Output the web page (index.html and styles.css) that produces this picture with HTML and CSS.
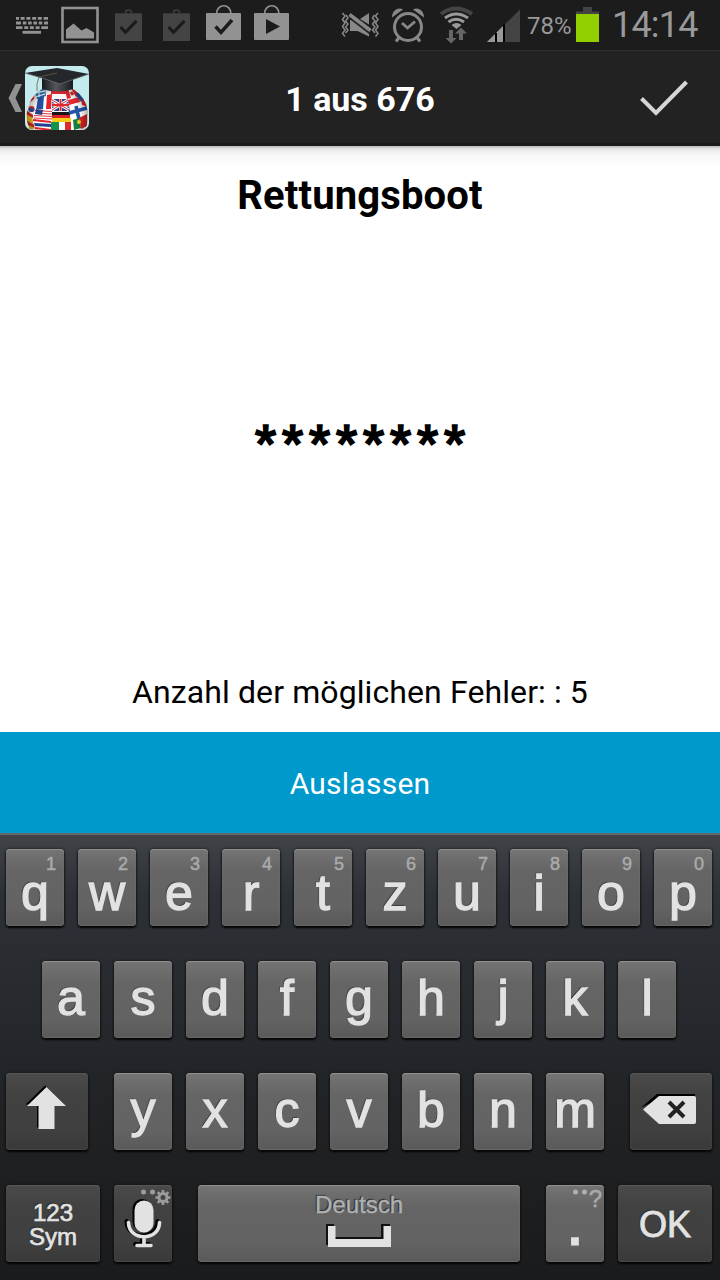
FILE: index.html
```html
<!DOCTYPE html>
<html lang="de">
<head>
<meta charset="utf-8">
<title>1 aus 676</title>
<link rel="stylesheet" href="styles.css">
</head>
<body>
<div class="screen">
  <div class="status">
    <svg width="54" height="50" viewBox="0 0 54 50"><g fill="none" stroke="#929292" stroke-width="2.900"><path d="M16 18.400h32" stroke-dasharray="3 1.600 4 1.800 4 1.800 4 1.600 4 1.800 6"/><path d="M16 23h32" stroke-dasharray="5 1.800 3.600 1.700 3.600 1.700 3.600 1.700 3.600 1.700 6"/><path d="M16 27.600h32" stroke-dasharray="6.500 1.700 4 1.700 4 1.700 4 1.700 9"/><path d="M22.500 32.300h18.500"/></g></svg>
    <svg width="52" height="50" viewBox="54 0 52 50"><rect x="62.500" y="8" width="35" height="34" fill="none" stroke="#929292" stroke-width="2.600"/><path d="M66 38.500v-9l7.500-6 8 7 5-2.500 7.500 4.500v6z" fill="#929292"/></svg>
    <svg width="48" height="50" viewBox="106 0 48 50"><path d="M125.500 13.500v-1q0-2.500 3-2.500t3 2.500v1" fill="none" stroke="#404040" stroke-width="1.500"/><path d="M115 13.300h27v27.700h-27z" fill="#444"/><path d="M120.500 27l5 5.300 11-11.500" fill="none" stroke="#1c1c1c" stroke-width="3.200"/></svg>
    <svg width="48" height="50" viewBox="154 0 48 50"><path d="M173.500 13.500v-1q0-2.500 3-2.500t3 2.500v1" fill="none" stroke="#404040" stroke-width="1.500"/><path d="M163 13.300h27v27.700h-27z" fill="#444"/><path d="M168.500 27l5 5.300 11-11.500" fill="none" stroke="#1c1c1c" stroke-width="3.200"/></svg>
    <svg width="45" height="50" viewBox="202 0 45 50"><path d="M216.500 14c0-11 14.500-11 14.500 0" fill="none" stroke="#929292" stroke-width="1.700"/><rect x="206" y="13" width="35" height="27" rx="1" fill="#929292"/><path d="M215.500 26.500l5.500 6 11-12.500" fill="none" stroke="#1c1c1c" stroke-width="3.500"/></svg>
    <svg width="47" height="50" viewBox="247 0 47 50"><path d="M264.500 14c0-11 14.500-11 14.500 0" fill="none" stroke="#929292" stroke-width="1.700"/><rect x="254" y="13" width="35" height="27" rx="1" fill="#929292"/><path d="M266 19v15l14-7.500z" fill="#1c1c1c"/></svg>
    <span class="spacer"></span>
    <svg width="48" height="50" viewBox="336 0 48 50"><g fill="none" stroke="#888" stroke-width="1.500"><path d="M342.500 13l2.500 3-2.500 3.500 2.500 3.500-2.500 3.500 2.500 3.500-2.500 3.500 2.500 3M346 15l2 3-2.500 3 2.500 3-2.500 3 2.500 3-2.500 3M378 13l-2.500 3 2.500 3.500-2.500 3.500 2.500 3.500-2.500 3.500 2.500 3.500-2.500 3M374.500 15l-2 3 2.500 3-2.500 3 2.500 3-2.500 3 2.500 3"/></g><path d="M350 20h3l16 12.500v4L357.500 31H350zM360 19l9-6v11.500z" fill="#888"/><path d="M350 18.500l19.500 15" stroke="#1c1c1c" stroke-width="1.300"/><path d="M349.500 14.500l21 16" stroke="#888" stroke-width="3.500"/></svg>
    <svg width="48" height="50" viewBox="384 0 48 50"><g fill="none" stroke="#888"><circle cx="408" cy="27" r="13.500" stroke-width="3"/><path d="M402 23l5.500 5 7.500-6.500" stroke-width="2.800"/><path d="M399 37.500l-3 4M417 37.500l3 4" stroke-width="3"/></g><path d="M392 17.500c0-7 6-11 11-8zM424 17.500c0-7-6-11-11-8z" fill="#888"/></svg>
    <svg width="48" height="50" viewBox="432 0 48 50"><g fill="none" stroke-width="3"><path d="M441 14q15-11 31 0" stroke="#444" stroke-width="4"/><path d="M445 18q11-8 23 0M448.500 22q7.500-5.500 15.500 0" stroke="#999"/></g><path d="M451.500 25q5-4 10 0l-5 4z" fill="#999"/><path d="M449 30h4v8h3.500l-5.500 5.500-5.500-5.500h3.500zM459 40h4v-6.500h4l-6-6-6 6h4z" fill="#666"/></svg>
    <svg width="44" height="50" viewBox="480 0 44 50"><path d="M487 42L520 9.500V42z" fill="#444"/><path d="M487 42l16.500-16.500V42z" fill="#999"/><path d="M496 33v9M504 24.500V42" stroke="#000" stroke-width="2"/></svg>
    <span class="percent">78%</span>
    <svg width="30" height="50" viewBox="573 0 30 50"><path d="M576 14v-2.500h7V7h9v4.500h7V14z" fill="#444"/><path d="M576 14h23v28h-23z" fill="#91cf00"/></svg>
    <span class="clock">14:14</span>
  </div>

  <div class="header">
    <div class="home">
      <svg width="25" height="96" viewBox="0 50 25 96"><path d="M15.500 84h6.500l-6.500 14 6.500 14h-6.500l-7-14z" fill="#919191"/></svg>
      <svg class="logo" width="64" height="64" viewBox="0 0 64 64">
        <defs><clipPath id="globe"><circle cx="32.500" cy="50" r="31"/></clipPath>
        <linearGradient id="cap" x2="1"><stop offset="0" stop-color="#16181b"/><stop offset=".45" stop-color="#53575c"/><stop offset="1" stop-color="#17191c"/></linearGradient>
        <radialGradient id="shade"><stop offset=".7" stop-opacity="0"/><stop offset="1" stop-opacity=".3"/></radialGradient></defs>
        <rect width="64" height="64" fill="#c3ebee"/>
        <g clip-path="url(#globe)">
          <rect width="64" height="64" fill="#fff"/>
          <path d="M9 24l11-3 1 9-9 3z" fill="#2a78bd"/><path d="M9 27l11-2M10 31l10-3M14 22v9" stroke="#fff" stroke-width="1.300"/>
          <path d="M13 32l6-2-1 13-7 1z" fill="#2450a2"/><path d="M22 29l5-1-1 15h-5z" fill="#e3252b"/>
          <path d="M26 24h15v4H26z" fill="#df2931"/><path d="M27 28h15v3H27z" fill="#f7f7f7"/>
          <path d="M2 34l8-9-1 8-6 5z" fill="#e0242b"/>
          <circle cx="6.500" cy="43" r="3" fill="#df2830"/><path d="M3.500 43q3-2 6 0a3 3 0 0 1-6 0" fill="#244da1"/>
          <path d="M0 46l7 4 2 13H0z" fill="#e7bd20"/><path d="M1 44l7 5v3l-7-4zM2 55l8 4v3l-7-3z" fill="#d4232a"/>
          <path d="M10 43l17 2v9l-18-2z" fill="#fff"/><path d="M10 44.500l17 1M10 47l17 1M9 49.500l18 1M9 52l18 1" stroke="#e33b43" stroke-width="1.200"/><path d="M11 43l7 1-1 5-7-1z" fill="#244087"/>
          <path d="M8 54l18 1v9H10z" fill="#fff"/><path d="M8 54l18 2M10 62l16 2" stroke="#df2730" stroke-width="2"/><path d="M9 57l17 1v3l-16-1z" fill="#203d91"/>
          <path d="M27 33h16l2 12H27z" fill="#22448f"/><path d="M27 34l17 10M43 34L27 44M35.500 33v12M27 39h17" stroke="#fff" stroke-width="3"/><path d="M27 34l17 10M43 34L27 44" stroke="#df2830" stroke-width="1"/><path d="M35.500 33v12M27 39h17" stroke="#df2830" stroke-width="2"/>
          <path d="M27 46h18v3H27z" fill="#161616"/><path d="M27 49h18v3H27z" fill="#dc2226"/><path d="M27 52h19v4H27z" fill="#f6ce18"/>
          <path d="M26 56h8v8h-8z" fill="#16934a"/><path d="M40 56h6v8h-6z" fill="#df2a2b"/>
          <path d="M43 22l3 10-4 1-2-10zM50 21l5 8-4 2-5-9z" fill="#df252c"/><path d="M46 26l2 3" stroke="#df252c" stroke-width="3"/>
          <path d="M43 34l11-3 1 5-11 3z" fill="#e22a31"/><path d="M54 24l7 9-5 3-5-7z" fill="#2355a0"/><path d="M56 33l7 3v5l-6-2z" fill="#dd292e"/>
          <path d="M44 47l18-5M51 40l3 13" stroke="#2455a3" stroke-width="3.600"/>
          <path d="M48 54l6-2 2 10-7 2z" fill="#13813f"/><path d="M54 52l8-4v12l-6 3z" fill="#db2426"/><circle cx="54" cy="56" r="2" fill="#f1cc22"/>
          <circle cx="32.500" cy="50" r="31" fill="url(#shade)"/>
        </g>
        <path d="M17 12h31v11q-15 5-31 0z" fill="url(#cap)"/><path d="M0 7L32 2l32 6-29 10Q17 12 0 7z" fill="#24272b"/><path d="M0 7q18 5 35 11L64 8" fill="none" stroke="#6b6f72" stroke-width=".8"/><path d="M32 7l-18 4-2 7v7" fill="none" stroke="#6d5a41" stroke-width=".8"/>
      </svg>
    </div>
    <h1 class="title">1 aus 676</h1>
    <svg class="done" width="80" height="96" viewBox="620 50 80 96"><path d="M641.500 98.500L656 113l30.500-31" fill="none" stroke="#d6d6d6" stroke-width="4"/></svg>
  </div>

  <div class="content">
    <div class="word">Rettungsboot</div>
    <div class="stars">********</div>
    <div class="tries">Anzahl der möglichen Fehler: : 5</div>
  </div>
  <div class="skip">Auslassen</div>

  <div class="keyboard">
    <div class="row top">
      <div class="key">q<sup>1</sup></div><div class="key">w<sup>2</sup></div><div class="key">e<sup>3</sup></div><div class="key">r<sup>4</sup></div><div class="key">t<sup>5</sup></div><div class="key">z<sup>6</sup></div><div class="key">u<sup>7</sup></div><div class="key">i<sup>8</sup></div><div class="key">o<sup>9</sup></div><div class="key">p<sup>0</sup></div>
    </div>
    <div class="row middle">
      <div class="key">a</div><div class="key">s</div><div class="key">d</div><div class="key">f</div><div class="key">g</div><div class="key">h</div><div class="key">j</div><div class="key">k</div><div class="key">l</div>
    </div>
    <div class="row">
      <div class="key dark wide"><svg width="82" height="77" viewBox="6 1073 82 77"><path d="M46.500 1087l19.500 19H54.500v23h-16v-23H27z" fill="#000" transform="translate(-1.500 -1.500)"/><path d="M46.500 1087l19.500 19H54.500v23h-16v-23H27z" fill="#e2e2e2"/></svg></div>
      <div class="letters"><div class="key">y</div><div class="key">x</div><div class="key">c</div><div class="key">v</div><div class="key">b</div><div class="key">n</div><div class="key">m</div></div>
      <div class="key dark wide"><svg width="82" height="77" viewBox="630 1073 82 77"><path d="M641 1107.500l16-13.500h38v3h-30z" fill="#000"/><path d="M643 1109.500l16-13.500h35q2 0 2 2v24q0 2-2 2h-35z" fill="#e2e2e2"/><path d="M669 1102l15 15M684 1102l-15 15" stroke="#222" stroke-width="4"/></svg></div>
    </div>
    <div class="row bottom">
      <div class="key dark sym"><span>123</span><span>Sym</span></div>
      <div class="key dark mic"><svg width="58" height="77" viewBox="114 1185 58 77">
        <g transform="translate(-2 -1.500)" stroke="#000" fill="none" stroke-width="4" stroke-linecap="round"><rect x="136.500" y="1202.500" width="15" height="28" rx="7.500" fill="#000"/><path d="M128.500 1222.500c0 19 31 19 31 0M144 1237v8M137 1245.500h14"/></g>
        <rect x="134.500" y="1200.500" width="19" height="32" rx="9.500" fill="#e2e2e2"/><path d="M128.500 1222.500c0 19 31 19 31 0M144 1237v8M137 1245.500h14" fill="none" stroke="#e2e2e2" stroke-width="3.600" stroke-linecap="round"/>
        <g fill="#9c9c9c"><circle cx="143.500" cy="1192" r="2.500"/><circle cx="152.500" cy="1192" r="2.500"/></g><g fill="none" stroke="#9c9c9c"><circle cx="163" cy="1197.500" r="4" stroke-width="3"/><path d="M163 1190v3M163 1202v3M155.500 1197.500h3M167.500 1197.500h3M157.700 1192.200l2 2M166.300 1200.800l2 2M157.700 1202.800l2-2M166.300 1194.200l2-2" stroke-width="2.600"/></g></svg></div>
      <div class="key space"><span>Deutsch</span><svg width="70" height="28" viewBox="324 1222 70 28"><path d="M326 1224h8v13.500h48v-13.500h8v6h-56v15h-8z" fill="none"/><path d="M326 1224h8v13h47v-13h9v2h-6v15h-52v4h-6z" fill="#111"/><path d="M328 1226h7.500v13h48v-13h7.500v21h-63z" fill="#e2e2e2"/></svg></div>
      <div class="key period">.<sup>?</sup><svg width="22" height="8" viewBox="570 1188 22 8"><g fill="#b0b0b0"><circle cx="575.500" cy="1192" r="2.500"/><circle cx="584.500" cy="1192" r="2.500"/></g></svg></div>
      <div class="key dark ok">OK</div>
    </div>
  </div>
</div>
</body>
</html>
```
FILE: styles.css
```css
body { margin: 0; }
svg { display: block; flex: none; }

.screen {
  width: 720px;
  height: 1280px;
  display: flex;
  flex-direction: column;
  overflow: hidden;
  background: #fff;
  color: #000;
  font-family: Roboto, "Liberation Sans", sans-serif;
}

.status {
  height: 50px;
  display: flex;
  background: #1c1c1c;
  color: #999;
  line-height: 50px;
  white-space: nowrap;
}
.spacer { flex: 1; }
.percent { width: 46px; padding-left: 3px; font-size: 24px; line-height: 52px; }
.clock { width: 108px; padding-left: 9px; font-size: 36px; letter-spacing: -0.8px; }

.header {
  box-sizing: border-box;
  height: 96px;
  display: grid;
  grid-template-columns: 100px 1fr 100px;
  background: #222;
  border-top: 1px solid #303030;
  border-bottom: 3px solid #1a1a1a;
}
.home { display: flex; align-items: center; height: 94px; }
.logo { border-radius: 7px; }
.title {
  margin: 0;
  color: #fff;
  font-size: 34px;
  line-height: 97px;
  text-align: center;
  white-space: nowrap;
}
.done { margin-top: -1px; }

.content {
  height: 586px;
  display: flex;
  flex-direction: column;
  align-items: center;
  white-space: nowrap;
  background: linear-gradient(#b8b8b8, #e8e8e8 3px, #f7f7f7 9px, #fff 20px);
}
.word { margin-top: 26px; height: 48px; line-height: 48px; font-size: 40px; font-weight: 700; letter-spacing: 0.15px; }
.stars {
  margin-top: 182px;
  height: 80px;
  padding-left: 6px;
  line-height: 80px;
  font-size: 46px;
  font-weight: 700;
  letter-spacing: 6.1px;
  -webkit-text-stroke: 1.6px #000;
}
.tries { margin-top: 190px; height: 40px; line-height: 40px; font-size: 32px; letter-spacing: 0.1px; }

.skip {
  height: 101px;
  background: #0099cc;
  color: #fff;
  font-size: 30px;
  line-height: 104px;
  letter-spacing: 0.25px;
  text-align: center;
}

.keyboard {
  box-sizing: border-box;
  height: 447px;
  padding: 14px 8px 18px 6px;
  border-top: 2px solid #65676b;
  display: flex;
  flex-direction: column;
  justify-content: space-between;
  background: linear-gradient(#404348, #2d3036 60px, #292c31 125px, #222528 240px, #1f2022 320px, #1a1b1d);
  font-family: "Liberation Sans", Arial, sans-serif;
  color: #e2e2e2;
}
.row { display: flex; justify-content: space-between; height: 77px; }
.middle { padding: 0 36px; }
.letters { display: flex; gap: 14px; }
.key {
  position: relative;
  width: 58px;
  height: 77px;
  border-radius: 4px;
  background: linear-gradient(#747474, #656565 22px, #636363 58px, #595959);
  box-shadow: inset 0 1px 1px #929292, inset 0 -1px 1px #686868, 0 2px 2px #050505, 0 0 3px #111;
  font-size: 50px;
  line-height: 75px;
  text-align: center;
  text-shadow: -1px -1px 1px #222;
  -webkit-text-stroke: 1.4px #e2e2e2;
}
.top .key { line-height: 89px; }
.key sup {
  position: absolute;
  top: 5px;
  right: 8px;
  font-size: 18px;
  line-height: 20px;
  color: #aaa;
  text-shadow: none;
  -webkit-text-stroke: 0.5px #aaa;
}
.dark {
  background: linear-gradient(#4a4a4a, #414141 25px, #404040 58px, #393939);
  box-shadow: inset 0 1px 1px #595959, inset 0 -1px 1px #484848, 0 2px 2px #050505, 0 0 3px #111;
}
.wide { width: 82px; }
.bottom { justify-content: flex-start; gap: 14px; }
.sym {
  width: 94px;
  box-sizing: border-box;
  padding-top: 16px;
  display: flex;
  flex-direction: column;
  font-size: 24px;
  line-height: 24px;
  -webkit-text-stroke-width: 0.7px;
}
.space {
  width: 322px;
  margin: 0 12px;
  display: flex;
  flex-direction: column;
  align-items: center;
  font-size: 24px;
  line-height: 39px;
  color: #b0b0b0;
  -webkit-text-stroke: 0.4px #b0b0b0;
}
.space svg { margin-top: -2px; }
.period { line-height: 84px; -webkit-text-stroke-width: 3px; }
.period sup { top: 2px; right: 2px; font-size: 24px; line-height: 24px; }
.period svg { position: absolute; left: 24px; top: 3px; }
.ok { width: 94px; font-size: 36px; line-height: 79px; -webkit-text-stroke-width: 0.9px; }
```
